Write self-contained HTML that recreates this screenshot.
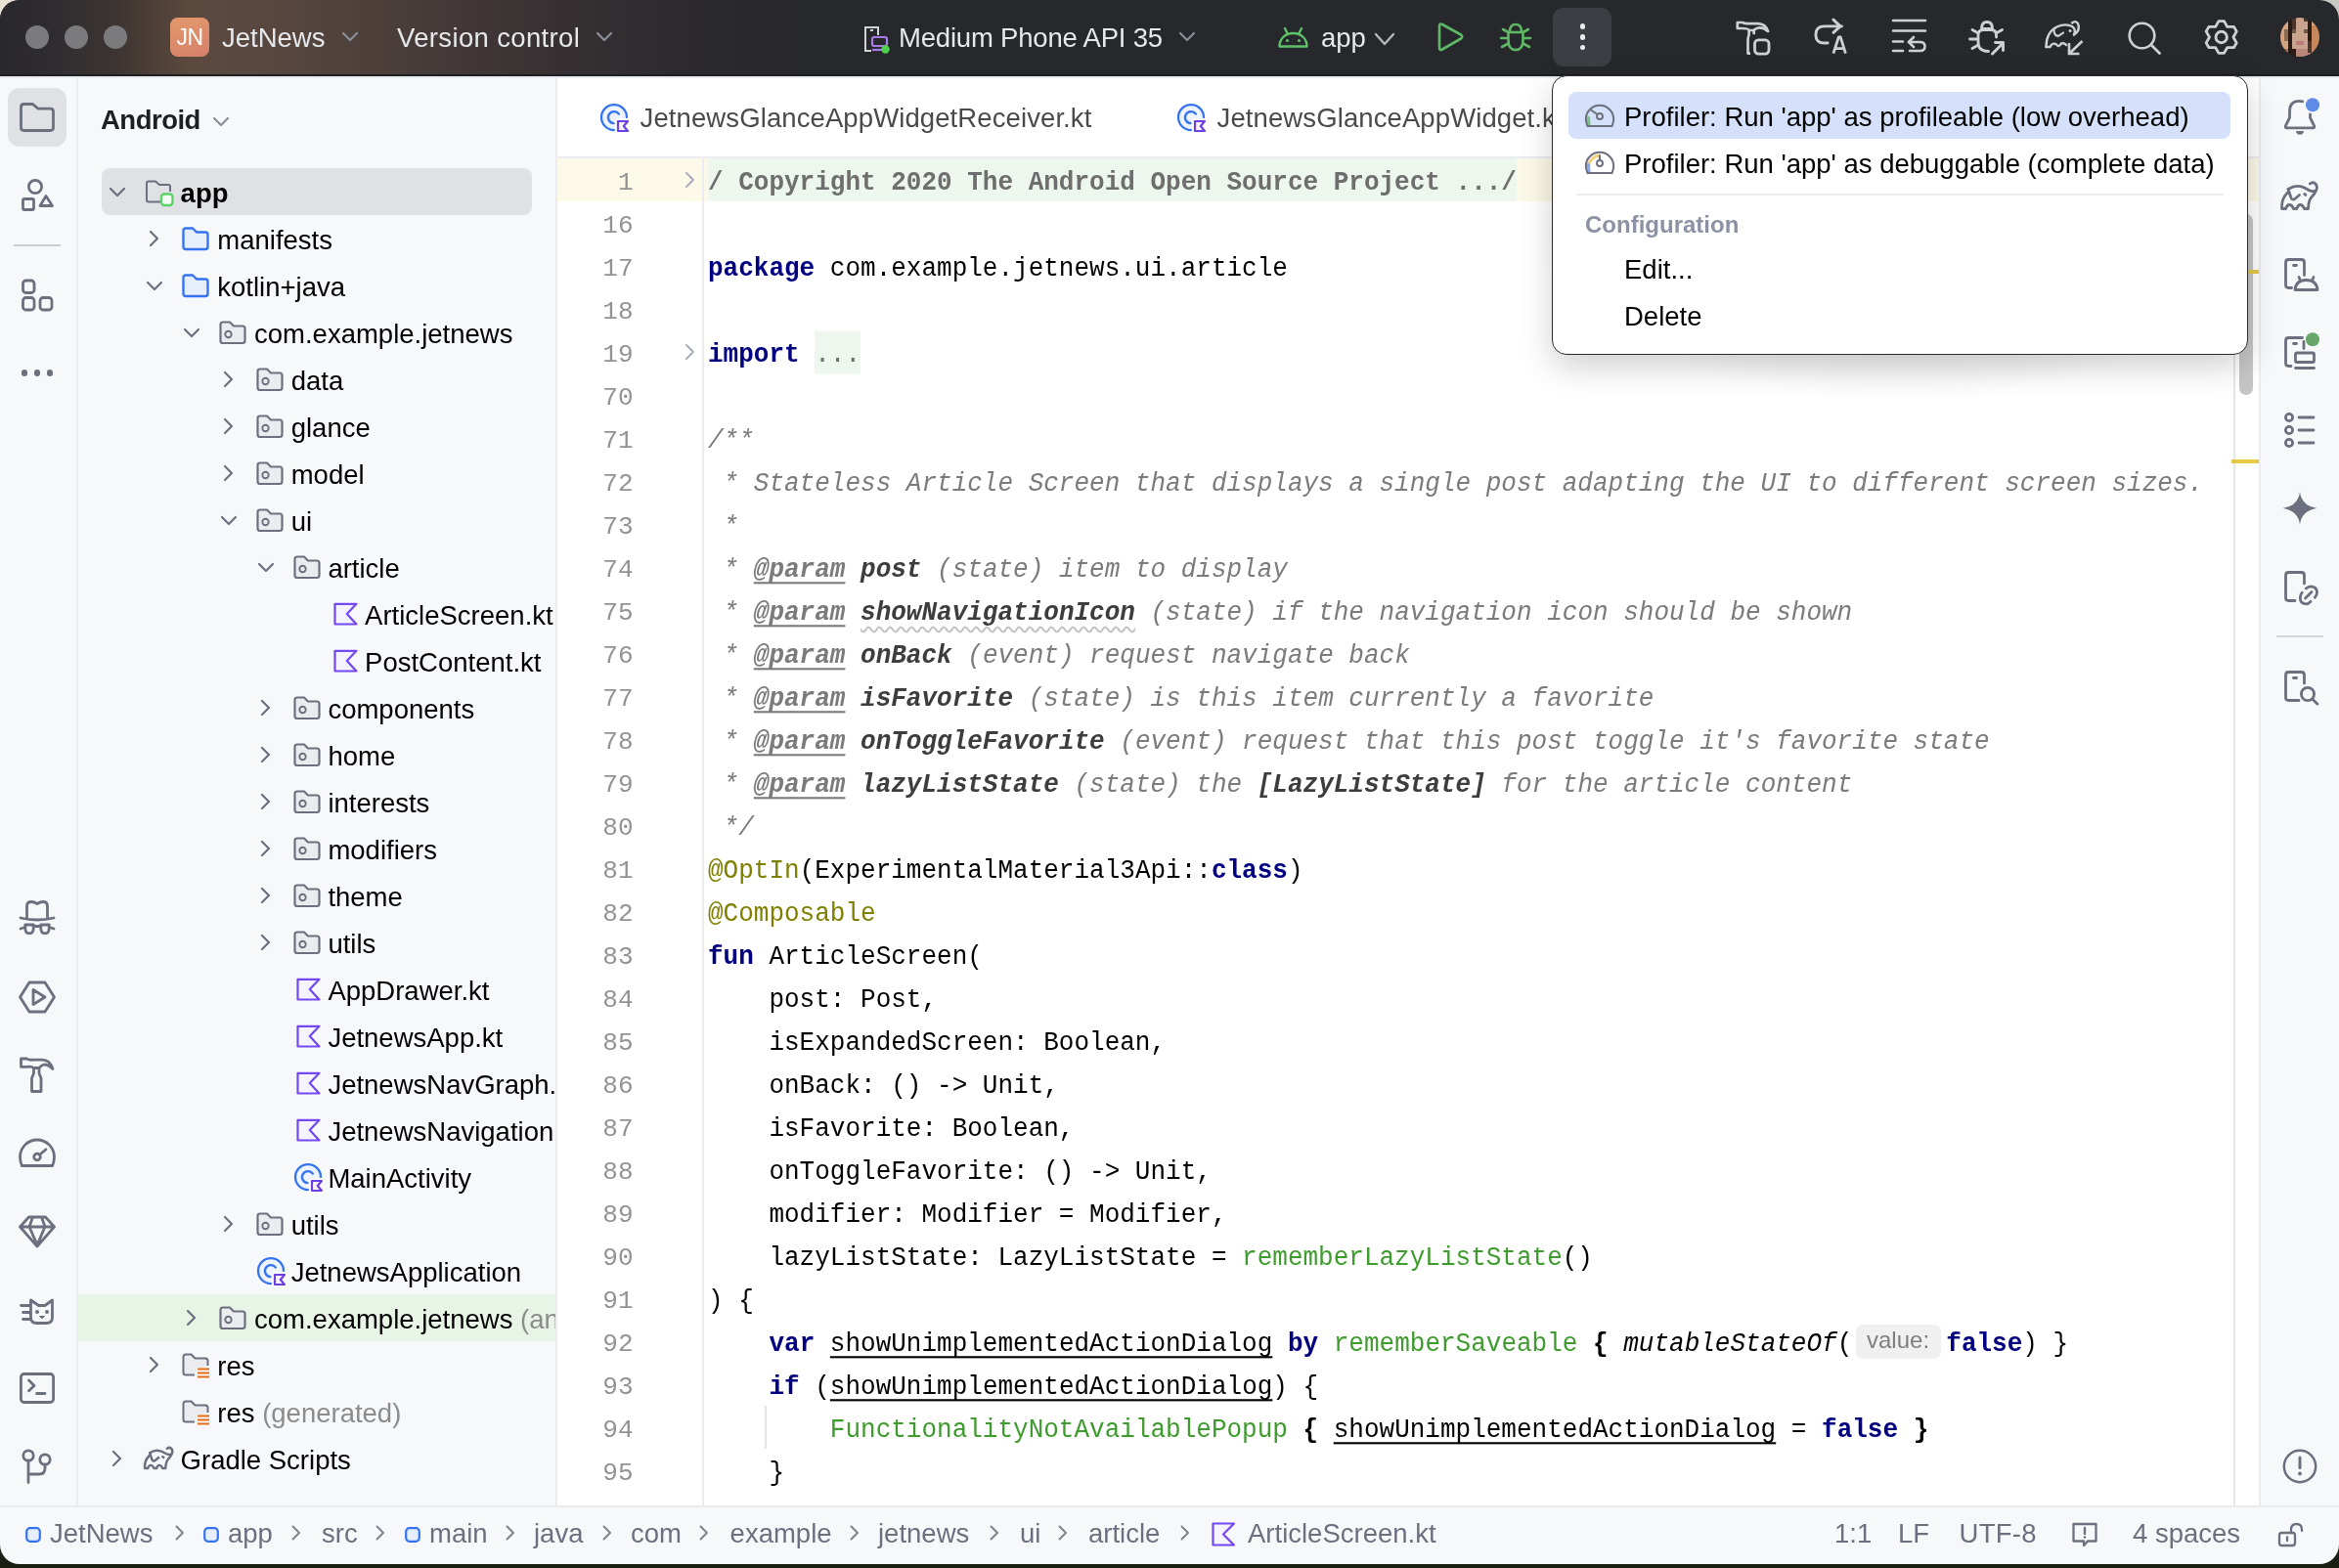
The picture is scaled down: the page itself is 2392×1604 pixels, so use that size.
<!DOCTYPE html>
<html><head><meta charset="utf-8">
<style>
*{margin:0;padding:0;box-sizing:border-box}
html,body{width:2392px;height:1604px;overflow:hidden}
body{position:relative;font-family:"Liberation Sans",sans-serif;background:#1b1e12}
.a{position:absolute}
svg{overflow:visible}
.code{font-family:"Liberation Mono",monospace;font-size:26px;white-space:pre;color:#000;transform:scaleY(1.05);transform-origin:0 29px}
.kw{color:#000080;font-weight:bold}
.an{color:#808000}
.dc{color:#7b7b7b;font-style:italic}
.tag{color:#7b7b7b;font-style:italic;font-weight:bold;text-decoration:underline;text-underline-offset:5px;text-decoration-thickness:2px}
.pn{color:#3d3d3d;font-style:italic;font-weight:bold}
.gr{color:#3e9b2d}
.b{font-weight:bold}
.ul{text-decoration:underline;text-underline-offset:5px;text-decoration-thickness:2px}
.ln{font-family:"Liberation Mono",monospace;font-size:26px;color:#939393;text-align:right;width:80px}
</style></head><body>

<div class="a" style="left:0;top:0;width:60px;height:60px;background:#e8e3d3"></div>
<div class="a" style="left:2332px;top:0;width:60px;height:60px;background:#c9c9c4"></div>
<div class="a" style="left:0;top:1560px;width:2392px;height:44px;background:#1b1e12"></div>
<div class="a" id="win" style="left:0;top:0;width:2392px;height:1600px;border-radius:20px;overflow:hidden;background:#f7f8fa;will-change:transform">
<div class="a" style="left:0;top:0;width:2392px;height:78px;background:#27282c"></div>
<div class="a" style="left:0;top:0;width:900px;height:78px;background:linear-gradient(90deg,#29282d 0px,#302d30 60px,#3d3432 120px,#4f4038 160px,#5c493e 195px,#594840 260px,#51433c 340px,#493d3a 420px,#3f3536 500px,#363032 580px,#2f2c2f 660px,#2a292d 740px,#27282c 840px)"></div>
<div class="a" style="left:0;top:76px;width:2392px;height:2px;background:#1e1f22"></div>
<div class="a" style="left:26px;top:26px;width:24px;height:24px;border-radius:50%;background:#7b7a7c"></div>
<div class="a" style="left:66px;top:26px;width:24px;height:24px;border-radius:50%;background:#7b7a7c"></div>
<div class="a" style="left:106px;top:26px;width:24px;height:24px;border-radius:50%;background:#7b7a7c"></div>
<div class="a" style="left:174px;top:18px;width:40px;height:40px;border-radius:8px;background:linear-gradient(160deg,#e29a6b,#d6806b);color:#fff;font-size:23px;line-height:40px;text-align:center;font-weight:normal;letter-spacing:-0.5px">JN</div>
<div class="a" style="left:227px;top:0px;height:78px;line-height:78px;font-size:27.5px;color:#e6e8ec;font-weight:normal;white-space:nowrap;">JetNews</div>
<svg class="a" style="left:350px;top:33px" width="16" height="9" viewBox="0 0 16 9"><path d="M1 1 L8.0 8 L15 1" fill="none" stroke="#8b8f9a" stroke-width="2.2" stroke-linecap="round" stroke-linejoin="round"/></svg>
<div class="a" style="left:406px;top:0px;height:78px;line-height:78px;font-size:27.5px;color:#e6e8ec;font-weight:normal;white-space:nowrap;letter-spacing:0.35px">Version control</div>
<svg class="a" style="left:610px;top:33px" width="16" height="9" viewBox="0 0 16 9"><path d="M1 1 L8.0 8 L15 1" fill="none" stroke="#8b8f9a" stroke-width="2.2" stroke-linecap="round" stroke-linejoin="round"/></svg>
<svg class="a" style="left:883px;top:26px" width="30" height="30" viewBox="0 0 30 30">
<path d="M8 26 H2 V2 H15 V10" fill="none" stroke="#d0d1d5" stroke-width="2"/>
<path d="M7 5 H10" stroke="#d0d1d5" stroke-width="2"/>
<rect x="9" y="12" width="15" height="9" rx="2" fill="none" stroke="#a77be8" stroke-width="2.2"/>
<path d="M9 25 H19" stroke="#a77be8" stroke-width="2.2"/>
<circle cx="22.5" cy="24.5" r="4.2" fill="#4fd14a"/></svg>
<div class="a" style="left:919px;top:0px;height:78px;line-height:78px;font-size:27.5px;color:#e6e8ec;font-weight:normal;white-space:nowrap;letter-spacing:-0.2px">Medium Phone API 35</div>
<svg class="a" style="left:1206px;top:33px" width="16" height="9" viewBox="0 0 16 9"><path d="M1 1 L8.0 8 L15 1" fill="none" stroke="#8b8f9a" stroke-width="2.2" stroke-linecap="round" stroke-linejoin="round"/></svg>
<svg class="a" style="left:1307px;top:28px" width="31" height="21" viewBox="0 0 31 21">
<path d="M1.5 19.5 C1.5 11.5 7.5 6 15.5 6 C23.5 6 29.5 11.5 29.5 19.5 Z" fill="none" stroke="#5fc26a" stroke-width="2.4" stroke-linejoin="round"/>
<path d="M7 1 L10 7 M24 1 L21 7" stroke="#5fc26a" stroke-width="2.4" stroke-linecap="round"/>
<circle cx="9.5" cy="13.5" r="1.6" fill="#5fc26a"/><circle cx="21.5" cy="13.5" r="1.6" fill="#5fc26a"/></svg>
<div class="a" style="left:1351px;top:0px;height:78px;line-height:78px;font-size:27.5px;color:#e6e8ec;font-weight:normal;white-space:nowrap;">app</div>
<svg class="a" style="left:1406px;top:34px" width="20" height="12" viewBox="0 0 20 12"><path d="M1 1 L10.0 11 L19 1" fill="none" stroke="#b4b6bb" stroke-width="2.4" stroke-linecap="round" stroke-linejoin="round"/></svg>
<svg class="a" style="left:1468px;top:22px" width="30" height="32" viewBox="0 0 30 32"><path d="M4 4.5 Q4 1.5 7 3 L26 13.5 Q28.5 15.5 26 17.5 L7 28.5 Q4 30 4 27 Z" fill="none" stroke="#5fb865" stroke-width="2.6" stroke-linejoin="round"/></svg>
<svg class="a" style="left:1533px;top:22px" width="34" height="32" viewBox="0 0 34 32">
<path d="M11 10 Q11 3 17 3 Q23 3 23 10" fill="none" stroke="#5fb865" stroke-width="2.6"/>
<path d="M9.5 11 H24.5 V19 Q24.5 29 17 29 Q9.5 29 9.5 19 Z" fill="none" stroke="#5fb865" stroke-width="2.6" stroke-linejoin="round"/>
<path d="M2 17 H9 M25 17 H32 M3 26 L9.5 22.5 M31 26 L24.5 22.5 M4 8 L9.5 11 M30 8 L24.5 11" stroke="#5fb865" stroke-width="2.6" stroke-linecap="round"/></svg>
<div class="a" style="left:1588px;top:8px;width:60px;height:60px;border-radius:11px;background:#3d3e43"></div>
<div class="a" style="left:1615.5px;top:24.2px;width:5.6px;height:5.6px;border-radius:50%;background:#eceef2"></div>
<div class="a" style="left:1615.5px;top:35.2px;width:5.6px;height:5.6px;border-radius:50%;background:#eceef2"></div>
<div class="a" style="left:1615.5px;top:45.800000000000004px;width:5.6px;height:5.6px;border-radius:50%;background:#eceef2"></div>
<svg class="a" style="left:1768px;top:14px" width="48" height="48" viewBox="0 0 48 48">
<path d="M8.8 9 H14 Q16 10.2 19 10.2 H30 Q37.5 10.5 40 18 Q35 13.5 30 14.5 Q27 15.5 25.2 17 H21 Q19.5 15 14 15 H8.8 Z" fill="none" stroke="#cfd0d4" stroke-width="2.7" stroke-linejoin="round"/>
<path d="M20.6 16.5 V21.5 Q19.5 24 19.5 28 V40.6 H22" fill="none" stroke="#cfd0d4" stroke-width="2.7" stroke-linejoin="round"/>
<path d="M25.7 17 V21.2" fill="none" stroke="#cfd0d4" stroke-width="2.7"/>
<rect x="26.5" y="26.8" width="14.5" height="14.3" rx="3.8" fill="none" stroke="#cfd0d4" stroke-width="2.8"/></svg>
<svg class="a" style="left:1848px;top:14px" width="48" height="48" viewBox="0 0 48 48">
<path d="M35.5 12.9 H17.8 Q8.9 12.9 8.9 21.4 Q8.9 30 17.8 30 H21.1" fill="none" stroke="#cfd0d4" stroke-width="2.9" stroke-linecap="round"/>
<path d="M26.9 6.1 L34 12.9 L26.9 19.3" fill="none" stroke="#cfd0d4" stroke-width="2.9" stroke-linecap="round" stroke-linejoin="round"/>
<path d="M26.9 40.6 L32.4 23.8 H34.2 L39.4 40.6 M29 35.7 H37.2" fill="none" stroke="#cfd0d4" stroke-width="2.8" stroke-linejoin="round"/></svg>
<svg class="a" style="left:1933px;top:18px" width="40" height="40" viewBox="0 0 40 40">
<path d="M3 3 H36 M3 13.5 H36 M3 24.5 H13 M3 34 H13" stroke="#cfd0d4" stroke-width="2.6" stroke-linecap="round"/>
<path d="M19 25 H30.5 Q35.5 25 35.5 29.5 Q35.5 34 30.5 34 H20" fill="none" stroke="#cfd0d4" stroke-width="2.6" stroke-linecap="round"/>
<path d="M24 20 L19 25 L24 30" fill="none" stroke="#cfd0d4" stroke-width="2.6" stroke-linecap="round" stroke-linejoin="round"/></svg>
<svg class="a" style="left:2008px;top:14px" width="48" height="48" viewBox="0 0 48 48">
<path d="M18.5 15.5 Q18.5 8.5 24 8.5 Q29.5 8.5 29.5 15.5 Z" fill="none" stroke="#cfd0d4" stroke-width="2.8" stroke-linejoin="round"/>
<path d="M25.5 38.5 Q15 38.5 15 29 V22 Q15 16.5 20.5 16.5 H28 Q33.5 16.5 33.5 22 V24" fill="none" stroke="#cfd0d4" stroke-width="2.8" stroke-linecap="round"/>
<path d="M9 16.5 L14.8 19.8 M6.5 26 H14.5 M9 35.5 L14.8 32.2 M39.5 16.5 L33.7 19.8" fill="none" stroke="#cfd0d4" stroke-width="2.8" stroke-linecap="round"/>
<path d="M29.5 41 L40 30.5 M32.5 29.5 H40.5 V37.5" fill="none" stroke="#cfd0d4" stroke-width="2.9" stroke-linecap="round" stroke-linejoin="round"/></svg>
<svg class="a" style="left:2091px;top:19px" width="44" height="40" viewBox="0 0 44 40">
<path d="M1.5 29 Q1.5 14 12.5 8.5 Q21 4.5 28 8 Q32.5 11 30 16.5" fill="none" stroke="#cfd0d4" stroke-width="2.4" stroke-linecap="round"/>
<path d="M30 16.5 Q37 12 34 5 Q31.5 1.5 28 4.5" fill="none" stroke="#cfd0d4" stroke-width="2.4" stroke-linecap="round"/>
<path d="M1.5 29 L5.5 29 Q8 24 12 26.5 Q14 30 17 25.5 Q20 24.5 22 27" fill="none" stroke="#cfd0d4" stroke-width="2.4" stroke-linecap="round"/>
<path d="M9.5 11.5 Q9.5 17 13.5 18 Q16.5 16.5 19 14.5" fill="none" stroke="#cfd0d4" stroke-width="2.2" stroke-linecap="round"/>
<circle cx="26" cy="12.5" r="1.5" fill="#cfd0d4"/>
<path d="M38.5 23 L25.5 35.5 M25 25 V36 H35.5" fill="none" stroke="#cfd0d4" stroke-width="2.6"/></svg>
<svg class="a" style="left:2174px;top:20px" width="38" height="38" viewBox="0 0 38 38">
<circle cx="16.5" cy="16.5" r="12.8" fill="none" stroke="#cfd0d4" stroke-width="2.6"/>
<path d="M26 26 L34.5 34.5" stroke="#cfd0d4" stroke-width="2.8" stroke-linecap="round"/></svg>
<svg class="a" style="left:2250px;top:16px" width="44" height="44" viewBox="0 0 44 44"><path d="M27.80 11.43 L34.54 11.43 L37.27 16.17 L33.90 22.00 L37.27 27.83 L34.54 32.57 L27.80 32.57 L24.43 38.40 L18.97 38.40 L15.60 32.57 L8.86 32.57 L6.13 27.83 L9.50 22.00 L6.13 16.17 L8.86 11.43 L15.60 11.43 L18.97 5.60 L24.43 5.60 Z" fill="none" stroke="#cfd0d4" stroke-width="2.8" stroke-linejoin="round"/><circle cx="21.7" cy="22" r="5.7" fill="none" stroke="#cfd0d4" stroke-width="2.9"/></svg>
<div class="a" style="left:2332px;top:18px;width:40px;height:40px;border-radius:50%;overflow:hidden"><svg width="40" height="40" style="filter:blur(0.6px)"><rect x="0" y="0" width="4.05" height="4.05" fill="#d6a37f"/><rect x="4" y="0" width="4.05" height="4.05" fill="#d6a37f"/><rect x="8" y="0" width="4.05" height="4.05" fill="#2a1c14"/><rect x="12" y="0" width="4.05" height="4.05" fill="#4a362a"/><rect x="16" y="0" width="4.05" height="4.05" fill="#c9a38e"/><rect x="20" y="0" width="4.05" height="4.05" fill="#c9a38e"/><rect x="24" y="0" width="4.05" height="4.05" fill="#4a362a"/><rect x="28" y="0" width="4.05" height="4.05" fill="#2a1c14"/><rect x="32" y="0" width="4.05" height="4.05" fill="#d6a37f"/><rect x="36" y="0" width="4.05" height="4.05" fill="#d6a37f"/><rect x="0" y="4" width="4.05" height="4.05" fill="#d6a37f"/><rect x="4" y="4" width="4.05" height="4.05" fill="#d6a37f"/><rect x="8" y="4" width="4.05" height="4.05" fill="#2a1c14"/><rect x="12" y="4" width="4.05" height="4.05" fill="#4a362a"/><rect x="16" y="4" width="4.05" height="4.05" fill="#c9a38e"/><rect x="20" y="4" width="4.05" height="4.05" fill="#c9a38e"/><rect x="24" y="4" width="4.05" height="4.05" fill="#c9a38e"/><rect x="28" y="4" width="4.05" height="4.05" fill="#2a1c14"/><rect x="32" y="4" width="4.05" height="4.05" fill="#d6a37f"/><rect x="36" y="4" width="4.05" height="4.05" fill="#c7875a"/><rect x="0" y="8" width="4.05" height="4.05" fill="#d6a37f"/><rect x="4" y="8" width="4.05" height="4.05" fill="#d6a37f"/><rect x="8" y="8" width="4.05" height="4.05" fill="#2a1c14"/><rect x="12" y="8" width="4.05" height="4.05" fill="#4a362a"/><rect x="16" y="8" width="4.05" height="4.05" fill="#c9a38e"/><rect x="20" y="8" width="4.05" height="4.05" fill="#c9a38e"/><rect x="24" y="8" width="4.05" height="4.05" fill="#c9a38e"/><rect x="28" y="8" width="4.05" height="4.05" fill="#2a1c14"/><rect x="32" y="8" width="4.05" height="4.05" fill="#c7875a"/><rect x="36" y="8" width="4.05" height="4.05" fill="#c7875a"/><rect x="0" y="12" width="4.05" height="4.05" fill="#d6a37f"/><rect x="4" y="12" width="4.05" height="4.05" fill="#8c6a50"/><rect x="8" y="12" width="4.05" height="4.05" fill="#2a1c14"/><rect x="12" y="12" width="4.05" height="4.05" fill="#6e5a48"/><rect x="16" y="12" width="4.05" height="4.05" fill="#c9a38e"/><rect x="20" y="12" width="4.05" height="4.05" fill="#c9a38e"/><rect x="24" y="12" width="4.05" height="4.05" fill="#6e5a48"/><rect x="28" y="12" width="4.05" height="4.05" fill="#2a1c14"/><rect x="32" y="12" width="4.05" height="4.05" fill="#c7875a"/><rect x="36" y="12" width="4.05" height="4.05" fill="#c7875a"/><rect x="0" y="16" width="4.05" height="4.05" fill="#d6a37f"/><rect x="4" y="16" width="4.05" height="4.05" fill="#8c6a50"/><rect x="8" y="16" width="4.05" height="4.05" fill="#2a1c14"/><rect x="12" y="16" width="4.05" height="4.05" fill="#c9a38e"/><rect x="16" y="16" width="4.05" height="4.05" fill="#c9a38e"/><rect x="20" y="16" width="4.05" height="4.05" fill="#c9a38e"/><rect x="24" y="16" width="4.05" height="4.05" fill="#c9a38e"/><rect x="28" y="16" width="4.05" height="4.05" fill="#2a1c14"/><rect x="32" y="16" width="4.05" height="4.05" fill="#c7875a"/><rect x="36" y="16" width="4.05" height="4.05" fill="#c7875a"/><rect x="0" y="20" width="4.05" height="4.05" fill="#d6a37f"/><rect x="4" y="20" width="4.05" height="4.05" fill="#8c6a50"/><rect x="8" y="20" width="4.05" height="4.05" fill="#2a1c14"/><rect x="12" y="20" width="4.05" height="4.05" fill="#c9a38e"/><rect x="16" y="20" width="4.05" height="4.05" fill="#c9a38e"/><rect x="20" y="20" width="4.05" height="4.05" fill="#c9a38e"/><rect x="24" y="20" width="4.05" height="4.05" fill="#c9a38e"/><rect x="28" y="20" width="4.05" height="4.05" fill="#2a1c14"/><rect x="32" y="20" width="4.05" height="4.05" fill="#c7875a"/><rect x="36" y="20" width="4.05" height="4.05" fill="#c7875a"/><rect x="0" y="24" width="4.05" height="4.05" fill="#d6a37f"/><rect x="4" y="24" width="4.05" height="4.05" fill="#d6a37f"/><rect x="8" y="24" width="4.05" height="4.05" fill="#2a1c14"/><rect x="12" y="24" width="4.05" height="4.05" fill="#c9a38e"/><rect x="16" y="24" width="4.05" height="4.05" fill="#b97a78"/><rect x="20" y="24" width="4.05" height="4.05" fill="#b97a78"/><rect x="24" y="24" width="4.05" height="4.05" fill="#c9a38e"/><rect x="28" y="24" width="4.05" height="4.05" fill="#4a362a"/><rect x="32" y="24" width="4.05" height="4.05" fill="#c7875a"/><rect x="36" y="24" width="4.05" height="4.05" fill="#c7875a"/><rect x="0" y="28" width="4.05" height="4.05" fill="#d6a37f"/><rect x="4" y="28" width="4.05" height="4.05" fill="#d6a37f"/><rect x="8" y="28" width="4.05" height="4.05" fill="#2a1c14"/><rect x="12" y="28" width="4.05" height="4.05" fill="#c9a38e"/><rect x="16" y="28" width="4.05" height="4.05" fill="#c9a38e"/><rect x="20" y="28" width="4.05" height="4.05" fill="#c9a38e"/><rect x="24" y="28" width="4.05" height="4.05" fill="#c9a38e"/><rect x="28" y="28" width="4.05" height="4.05" fill="#4a362a"/><rect x="32" y="28" width="4.05" height="4.05" fill="#c7875a"/><rect x="36" y="28" width="4.05" height="4.05" fill="#c7875a"/><rect x="0" y="32" width="4.05" height="4.05" fill="#d6a37f"/><rect x="4" y="32" width="4.05" height="4.05" fill="#a86a50"/><rect x="8" y="32" width="4.05" height="4.05" fill="#2a1c14"/><rect x="12" y="32" width="4.05" height="4.05" fill="#2a1c14"/><rect x="16" y="32" width="4.05" height="4.05" fill="#b8867a"/><rect x="20" y="32" width="4.05" height="4.05" fill="#b8867a"/><rect x="24" y="32" width="4.05" height="4.05" fill="#b8867a"/><rect x="28" y="32" width="4.05" height="4.05" fill="#4a362a"/><rect x="32" y="32" width="4.05" height="4.05" fill="#c7875a"/><rect x="36" y="32" width="4.05" height="4.05" fill="#a86a50"/><rect x="0" y="36" width="4.05" height="4.05" fill="#a86a50"/><rect x="4" y="36" width="4.05" height="4.05" fill="#a86a50"/><rect x="8" y="36" width="4.05" height="4.05" fill="#2a1c14"/><rect x="12" y="36" width="4.05" height="4.05" fill="#2a1c14"/><rect x="16" y="36" width="4.05" height="4.05" fill="#b8867a"/><rect x="20" y="36" width="4.05" height="4.05" fill="#b8867a"/><rect x="24" y="36" width="4.05" height="4.05" fill="#b8867a"/><rect x="28" y="36" width="4.05" height="4.05" fill="#b8867a"/><rect x="32" y="36" width="4.05" height="4.05" fill="#a86a50"/><rect x="36" y="36" width="4.05" height="4.05" fill="#a86a50"/></svg></div>
<div class="a" style="left:0;top:78px;width:2392px;height:2px;background:#ebecf0"></div>
<div class="a" style="left:78px;top:80px;width:2px;height:1460px;background:#ebecf0"></div>
<div class="a" style="left:568px;top:80px;width:2px;height:1460px;background:#ebecf0"></div>
<div class="a" style="left:570px;top:80px;width:1740px;height:1460px;background:#fff"></div>
<div class="a" style="left:2310px;top:80px;width:2px;height:1460px;background:#ebecf0"></div>
<div class="a" style="left:0;top:1540px;width:2392px;height:2px;background:#ebecf0"></div>
<div class="a" style="left:8px;top:90px;width:60px;height:60px;border-radius:12px;background:#dfe1e5"></div>
<svg class="a" style="left:14px;top:96px" width="48" height="48" viewBox="0 0 48 48"><path d="M7.5 13.5 Q7.5 10.5 10.5 10.5 H19.5 L25 15.2 H37.5 Q40.5 15.2 40.5 18.2 V34.5 Q40.5 37.5 37.5 37.5 H10.5 Q7.5 37.5 7.5 34.5 Z" fill="none" stroke="#6c707e" stroke-width="2.8" stroke-linecap="round" stroke-linejoin="round"/></svg>
<svg class="a" style="left:14px;top:176px" width="48" height="48" viewBox="0 0 48 48"><circle cx="22" cy="15" r="6.6" fill="none" stroke="#6c707e" stroke-width="2.8"/><rect x="9.5" y="27.5" width="11" height="11" rx="1.5" fill="none" stroke="#6c707e" stroke-width="2.8"/><path d="M33 24.5 L39.5 34.5 H27 Z" fill="none" stroke="#6c707e" stroke-width="2.8" stroke-linecap="round" stroke-linejoin="round"/></svg>
<div class="a" style="left:14px;top:250px;width:48px;height:2px;background:#c9ccd6"></div>
<svg class="a" style="left:14px;top:276px" width="48" height="48" viewBox="0 0 48 48"><rect x="9.5" y="11" width="11.5" height="12.5" rx="3" fill="none" stroke="#6c707e" stroke-width="2.8"/><rect x="9.5" y="28.5" width="11.5" height="12.5" rx="3" fill="none" stroke="#6c707e" stroke-width="2.8"/><rect x="27" y="28.5" width="12" height="12.5" rx="3" fill="none" stroke="#6c707e" stroke-width="2.8"/></svg>
<div class="a" style="left:21.8px;top:378.40000000000003px;width:6.4px;height:6.4px;border-radius:50%;background:#6c707e"></div>
<div class="a" style="left:34.8px;top:378.40000000000003px;width:6.4px;height:6.4px;border-radius:50%;background:#6c707e"></div>
<div class="a" style="left:47.8px;top:378.40000000000003px;width:6.4px;height:6.4px;border-radius:50%;background:#6c707e"></div>
<svg class="a" style="left:14px;top:914px" width="48" height="48" viewBox="0 0 48 48"><path d="M13.5 24.5 V13 Q13.5 8.5 18 8.5 Q21 8.5 24 10.5 Q27 8.5 30 8.5 Q34.5 8.5 34.5 13 V24.5" fill="none" stroke="#6c707e" stroke-width="2.8" stroke-linecap="round" stroke-linejoin="round"/><path d="M7 25 Q24 29 41 25" fill="none" stroke="#6c707e" stroke-width="2.8" stroke-linecap="round" stroke-linejoin="round"/><path d="M11.8 32 H20.2 V35.5 Q20.2 40.8 16 40.8 Q11.8 40.8 11.8 35.5 Z M27.8 32 H36.2 V35.5 Q36.2 40.8 32 40.8 Q27.8 40.8 27.8 35.5 Z" fill="none" stroke="#6c707e" stroke-width="2.8" stroke-linecap="round" stroke-linejoin="round"/><path d="M20.2 33.5 H27.8 M7 36 L11.8 34.5 M41 36 L36.2 34.5" fill="none" stroke="#6c707e" stroke-width="2.8" stroke-linecap="round" stroke-linejoin="round"/></svg>
<svg class="a" style="left:14px;top:996px" width="48" height="48" viewBox="0 0 48 48"><path d="M16 9 H32 L41.5 24 L32 39 H16 L6.5 24 Z" fill="none" stroke="#6c707e" stroke-width="2.8" stroke-linecap="round" stroke-linejoin="round"/><path d="M20 16.5 L32 24 L20 31.5 Z" fill="none" stroke="#6c707e" stroke-width="2.8" stroke-linecap="round" stroke-linejoin="round"/></svg>
<svg class="a" style="left:14px;top:1075px" width="48" height="48" viewBox="0 0 48 48"><path d="M7.5 8 H13.5 Q15.5 9.5 19.5 9.2 H29 Q37 9.2 40 18.5 Q35.5 14 31 14 Q28.5 14.5 26 17.5 H20.5 Q18.5 15.5 13.5 16.3 H7.5 Z" fill="none" stroke="#6c707e" stroke-width="2.8" stroke-linecap="round" stroke-linejoin="round"/><path d="M20.5 17.5 V23 L18.5 28 V41.5 H28 V28 L26 23 V17.5" fill="none" stroke="#6c707e" stroke-width="2.8" stroke-linecap="round" stroke-linejoin="round"/></svg>
<svg class="a" style="left:14px;top:1155px" width="48" height="48" viewBox="0 0 48 48"><path d="M8.3 37.5 Q6.5 33 6.5 28.5 A17.5 17.5 0 0 1 41.5 28.5 Q41.5 33 39.7 37.5 Z" fill="none" stroke="#6c707e" stroke-width="2.8" stroke-linecap="round" stroke-linejoin="round"/><circle cx="24" cy="28.5" r="3.3" fill="none" stroke="#6c707e" stroke-width="2.8"/><path d="M26.6 26.2 L33 20.8" fill="none" stroke="#6c707e" stroke-width="2.8" stroke-linecap="round" stroke-linejoin="round"/></svg>
<svg class="a" style="left:14px;top:1235px" width="48" height="48" viewBox="0 0 48 48"><path d="M15.5 10 H32.5 L41.5 20 L24 40 L6.5 20 Z M6.5 20 H41.5 M19.5 10 L16 20 L24 38.5 L32 20 L28.5 10" fill="none" stroke="#6c707e" stroke-width="2.8" stroke-linecap="round" stroke-linejoin="round"/></svg>
<svg class="a" style="left:14px;top:1316px" width="48" height="48" viewBox="0 0 48 48"><path d="M17.5 14 L25.5 19.5 H32 L39.5 14 V31.5 Q39.5 37.5 33.5 37.5 H23.5 Q17.5 37.5 17.5 31.5 Z" fill="none" stroke="#6c707e" stroke-width="2.8" stroke-linecap="round" stroke-linejoin="round"/><path d="M7.5 19.5 H17 M9.5 26.5 H17 M9.5 33.5 H17" fill="none" stroke="#6c707e" stroke-width="2.8" stroke-linecap="round" stroke-linejoin="round"/><circle cx="24" cy="26" r="2" fill="#6c707e"/><circle cx="34" cy="26" r="2" fill="#6c707e"/><path d="M26.5 30.5 H31.5 L29 32.8 Z" fill="#6c707e" stroke="#6c707e" stroke-width="1" stroke-linejoin="round"/></svg>
<svg class="a" style="left:14px;top:1396px" width="48" height="48" viewBox="0 0 48 48"><rect x="7.4" y="9.5" width="33.2" height="29" rx="3.2" fill="none" stroke="#6c707e" stroke-width="2.8"/><path d="M15.5 16 L21 21.5 L15.5 26.8 M23.5 29.5 H32" fill="none" stroke="#6c707e" stroke-width="2.8" stroke-linecap="round" stroke-linejoin="round"/></svg>
<svg class="a" style="left:14px;top:1475px" width="48" height="48" viewBox="0 0 48 48"><circle cx="15" cy="14" r="5.2" fill="none" stroke="#6c707e" stroke-width="2.8"/><circle cx="32" cy="18" r="5.2" fill="none" stroke="#6c707e" stroke-width="2.8"/><path d="M15 19.2 V41.5 M15 33 H26 Q32 33 32 27 V23.2" fill="none" stroke="#6c707e" stroke-width="2.8" stroke-linecap="round" stroke-linejoin="round"/></svg>
<div class="a" style="left:80px;top:80px;width:488px;height:1460px;overflow:hidden">
<div class="a" style="left:23px;top:18px;height:50px;line-height:50px;font-size:27.5px;color:#1e1f22;font-weight:bold;white-space:nowrap;letter-spacing:-0.5px">Android</div>
<svg class="a" style="left:138px;top:40px" width="16" height="9" viewBox="0 0 16 9"><path d="M1 1 L8 8 L15 1" fill="none" stroke="#8a8e9b" stroke-width="2.2" stroke-linecap="round" stroke-linejoin="round"/></svg>
<div class="a" style="left:24px;top:92px;width:440px;height:48px;border-radius:8px;background:#dfe1e5"></div>
<div class="a" style="left:0px;top:1244px;width:488px;height:48px;background:#e8f5e6"></div>
<svg class="a" style="left:31.799999999999997px;top:111.5px" width="16" height="9" viewBox="0 0 16 9"><path d="M1 1 L8 8 L15 1" fill="none" stroke="#6c707e" stroke-width="2.2" stroke-linecap="round" stroke-linejoin="round"/></svg>
<svg class="a" style="left:68.0px;top:104px" width="32" height="30" viewBox="0 0 32 30"><path d="M17 22.5 H4 Q2 22.5 2 20.5 V3.5 Q2 1.5 4 1.5 H11 L15 5 H24 Q26 5 26 7 V12" fill="none" stroke="#6c707e" stroke-width="2" stroke-linejoin="round"/><rect x="17" y="14.5" width="11.5" height="11.5" rx="3" fill="#f2fcf3" stroke="#5fd16a" stroke-width="2.4"/></svg>
<div class="a" style="left:104.6px;top:93.5px;height:48px;line-height:48px;font-size:27.5px;color:#000;font-weight:bold;white-space:nowrap;">app</div>
<svg class="a" style="left:73.30000000000001px;top:156px" width="9" height="16" viewBox="0 0 9 16"><path d="M1 1 L8 8 L1 15" fill="none" stroke="#6c707e" stroke-width="2.2" stroke-linecap="round" stroke-linejoin="round"/></svg>
<svg class="a" style="left:105.9px;top:152px" width="28" height="24" viewBox="0 0 28 24"><path d="M1.5 4 Q1.5 1.5 4 1.5 H11 L15 5.5 H24 Q26.5 5.5 26.5 8 V20.5 Q26.5 23 24 23 H4 Q1.5 23 1.5 20.5 Z" fill="#e7effd" stroke="#3574f0" stroke-width="2.4" stroke-linejoin="round"/></svg>
<div class="a" style="left:142.3px;top:141.5px;height:48px;line-height:48px;font-size:27.5px;color:#000;font-weight:normal;white-space:nowrap;">manifests</div>
<svg class="a" style="left:69.80000000000001px;top:207.5px" width="16" height="9" viewBox="0 0 16 9"><path d="M1 1 L8 8 L15 1" fill="none" stroke="#6c707e" stroke-width="2.2" stroke-linecap="round" stroke-linejoin="round"/></svg>
<svg class="a" style="left:105.9px;top:200px" width="28" height="24" viewBox="0 0 28 24"><path d="M1.5 4 Q1.5 1.5 4 1.5 H11 L15 5.5 H24 Q26.5 5.5 26.5 8 V20.5 Q26.5 23 24 23 H4 Q1.5 23 1.5 20.5 Z" fill="#e7effd" stroke="#3574f0" stroke-width="2.4" stroke-linejoin="round"/></svg>
<div class="a" style="left:142.3px;top:189.5px;height:48px;line-height:48px;font-size:27.5px;color:#000;font-weight:normal;white-space:nowrap;">kotlin+java</div>
<svg class="a" style="left:107.80000000000001px;top:255.5px" width="16" height="9" viewBox="0 0 16 9"><path d="M1 1 L8 8 L15 1" fill="none" stroke="#6c707e" stroke-width="2.2" stroke-linecap="round" stroke-linejoin="round"/></svg>
<svg class="a" style="left:143.8px;top:248px" width="28" height="24" viewBox="0 0 28 24"><path d="M1.5 4 Q1.5 1.5 4 1.5 H11 L15 5.5 H24 Q26.5 5.5 26.5 8 V20.5 Q26.5 23 24 23 H4 Q1.5 23 1.5 20.5 Z" fill="#ebecf0" stroke="#6c707e" stroke-width="2.2" stroke-linejoin="round"/><circle cx="9.5" cy="14" r="3.2" fill="none" stroke="#6c707e" stroke-width="1.9"/></svg>
<div class="a" style="left:180.0px;top:237.5px;height:48px;line-height:48px;font-size:27.5px;color:#000;font-weight:normal;white-space:nowrap;">com.example.jetnews</div>
<svg class="a" style="left:149.3px;top:300px" width="9" height="16" viewBox="0 0 9 16"><path d="M1 1 L8 8 L1 15" fill="none" stroke="#6c707e" stroke-width="2.2" stroke-linecap="round" stroke-linejoin="round"/></svg>
<svg class="a" style="left:181.7px;top:296px" width="28" height="24" viewBox="0 0 28 24"><path d="M1.5 4 Q1.5 1.5 4 1.5 H11 L15 5.5 H24 Q26.5 5.5 26.5 8 V20.5 Q26.5 23 24 23 H4 Q1.5 23 1.5 20.5 Z" fill="#ebecf0" stroke="#6c707e" stroke-width="2.2" stroke-linejoin="round"/><circle cx="9.5" cy="14" r="3.2" fill="none" stroke="#6c707e" stroke-width="1.9"/></svg>
<div class="a" style="left:217.7px;top:285.5px;height:48px;line-height:48px;font-size:27.5px;color:#000;font-weight:normal;white-space:nowrap;">data</div>
<svg class="a" style="left:149.3px;top:348px" width="9" height="16" viewBox="0 0 9 16"><path d="M1 1 L8 8 L1 15" fill="none" stroke="#6c707e" stroke-width="2.2" stroke-linecap="round" stroke-linejoin="round"/></svg>
<svg class="a" style="left:181.7px;top:344px" width="28" height="24" viewBox="0 0 28 24"><path d="M1.5 4 Q1.5 1.5 4 1.5 H11 L15 5.5 H24 Q26.5 5.5 26.5 8 V20.5 Q26.5 23 24 23 H4 Q1.5 23 1.5 20.5 Z" fill="#ebecf0" stroke="#6c707e" stroke-width="2.2" stroke-linejoin="round"/><circle cx="9.5" cy="14" r="3.2" fill="none" stroke="#6c707e" stroke-width="1.9"/></svg>
<div class="a" style="left:217.7px;top:333.5px;height:48px;line-height:48px;font-size:27.5px;color:#000;font-weight:normal;white-space:nowrap;">glance</div>
<svg class="a" style="left:149.3px;top:396px" width="9" height="16" viewBox="0 0 9 16"><path d="M1 1 L8 8 L1 15" fill="none" stroke="#6c707e" stroke-width="2.2" stroke-linecap="round" stroke-linejoin="round"/></svg>
<svg class="a" style="left:181.7px;top:392px" width="28" height="24" viewBox="0 0 28 24"><path d="M1.5 4 Q1.5 1.5 4 1.5 H11 L15 5.5 H24 Q26.5 5.5 26.5 8 V20.5 Q26.5 23 24 23 H4 Q1.5 23 1.5 20.5 Z" fill="#ebecf0" stroke="#6c707e" stroke-width="2.2" stroke-linejoin="round"/><circle cx="9.5" cy="14" r="3.2" fill="none" stroke="#6c707e" stroke-width="1.9"/></svg>
<div class="a" style="left:217.7px;top:381.5px;height:48px;line-height:48px;font-size:27.5px;color:#000;font-weight:normal;white-space:nowrap;">model</div>
<svg class="a" style="left:145.8px;top:447.5px" width="16" height="9" viewBox="0 0 16 9"><path d="M1 1 L8 8 L15 1" fill="none" stroke="#6c707e" stroke-width="2.2" stroke-linecap="round" stroke-linejoin="round"/></svg>
<svg class="a" style="left:181.7px;top:440px" width="28" height="24" viewBox="0 0 28 24"><path d="M1.5 4 Q1.5 1.5 4 1.5 H11 L15 5.5 H24 Q26.5 5.5 26.5 8 V20.5 Q26.5 23 24 23 H4 Q1.5 23 1.5 20.5 Z" fill="#ebecf0" stroke="#6c707e" stroke-width="2.2" stroke-linejoin="round"/><circle cx="9.5" cy="14" r="3.2" fill="none" stroke="#6c707e" stroke-width="1.9"/></svg>
<div class="a" style="left:217.7px;top:429.5px;height:48px;line-height:48px;font-size:27.5px;color:#000;font-weight:normal;white-space:nowrap;">ui</div>
<svg class="a" style="left:183.8px;top:495.5px" width="16" height="9" viewBox="0 0 16 9"><path d="M1 1 L8 8 L15 1" fill="none" stroke="#6c707e" stroke-width="2.2" stroke-linecap="round" stroke-linejoin="round"/></svg>
<svg class="a" style="left:219.60000000000002px;top:488px" width="28" height="24" viewBox="0 0 28 24"><path d="M1.5 4 Q1.5 1.5 4 1.5 H11 L15 5.5 H24 Q26.5 5.5 26.5 8 V20.5 Q26.5 23 24 23 H4 Q1.5 23 1.5 20.5 Z" fill="#ebecf0" stroke="#6c707e" stroke-width="2.2" stroke-linejoin="round"/><circle cx="9.5" cy="14" r="3.2" fill="none" stroke="#6c707e" stroke-width="1.9"/></svg>
<div class="a" style="left:255.39999999999998px;top:477.5px;height:48px;line-height:48px;font-size:27.5px;color:#000;font-weight:normal;white-space:nowrap;">article</div>
<svg class="a" style="left:259.5px;top:536px" width="26" height="24" viewBox="0 0 26 24"><path d="M2.5 1.8 H24.5 L14.8 12 L24.5 22.5 H2.5 Z" fill="#f5f3ff" stroke="#7349ef" stroke-width="2.2" stroke-linejoin="round"/></svg>
<div class="a" style="left:293.1px;top:525.5px;height:48px;line-height:48px;font-size:27.5px;color:#000;font-weight:normal;white-space:nowrap;">ArticleScreen.kt</div>
<svg class="a" style="left:259.5px;top:584px" width="26" height="24" viewBox="0 0 26 24"><path d="M2.5 1.8 H24.5 L14.8 12 L24.5 22.5 H2.5 Z" fill="#f5f3ff" stroke="#7349ef" stroke-width="2.2" stroke-linejoin="round"/></svg>
<div class="a" style="left:293.1px;top:573.5px;height:48px;line-height:48px;font-size:27.5px;color:#000;font-weight:normal;white-space:nowrap;">PostContent.kt</div>
<svg class="a" style="left:187.3px;top:636px" width="9" height="16" viewBox="0 0 9 16"><path d="M1 1 L8 8 L1 15" fill="none" stroke="#6c707e" stroke-width="2.2" stroke-linecap="round" stroke-linejoin="round"/></svg>
<svg class="a" style="left:219.60000000000002px;top:632px" width="28" height="24" viewBox="0 0 28 24"><path d="M1.5 4 Q1.5 1.5 4 1.5 H11 L15 5.5 H24 Q26.5 5.5 26.5 8 V20.5 Q26.5 23 24 23 H4 Q1.5 23 1.5 20.5 Z" fill="#ebecf0" stroke="#6c707e" stroke-width="2.2" stroke-linejoin="round"/><circle cx="9.5" cy="14" r="3.2" fill="none" stroke="#6c707e" stroke-width="1.9"/></svg>
<div class="a" style="left:255.39999999999998px;top:621.5px;height:48px;line-height:48px;font-size:27.5px;color:#000;font-weight:normal;white-space:nowrap;">components</div>
<svg class="a" style="left:187.3px;top:684px" width="9" height="16" viewBox="0 0 9 16"><path d="M1 1 L8 8 L1 15" fill="none" stroke="#6c707e" stroke-width="2.2" stroke-linecap="round" stroke-linejoin="round"/></svg>
<svg class="a" style="left:219.60000000000002px;top:680px" width="28" height="24" viewBox="0 0 28 24"><path d="M1.5 4 Q1.5 1.5 4 1.5 H11 L15 5.5 H24 Q26.5 5.5 26.5 8 V20.5 Q26.5 23 24 23 H4 Q1.5 23 1.5 20.5 Z" fill="#ebecf0" stroke="#6c707e" stroke-width="2.2" stroke-linejoin="round"/><circle cx="9.5" cy="14" r="3.2" fill="none" stroke="#6c707e" stroke-width="1.9"/></svg>
<div class="a" style="left:255.39999999999998px;top:669.5px;height:48px;line-height:48px;font-size:27.5px;color:#000;font-weight:normal;white-space:nowrap;">home</div>
<svg class="a" style="left:187.3px;top:732px" width="9" height="16" viewBox="0 0 9 16"><path d="M1 1 L8 8 L1 15" fill="none" stroke="#6c707e" stroke-width="2.2" stroke-linecap="round" stroke-linejoin="round"/></svg>
<svg class="a" style="left:219.60000000000002px;top:728px" width="28" height="24" viewBox="0 0 28 24"><path d="M1.5 4 Q1.5 1.5 4 1.5 H11 L15 5.5 H24 Q26.5 5.5 26.5 8 V20.5 Q26.5 23 24 23 H4 Q1.5 23 1.5 20.5 Z" fill="#ebecf0" stroke="#6c707e" stroke-width="2.2" stroke-linejoin="round"/><circle cx="9.5" cy="14" r="3.2" fill="none" stroke="#6c707e" stroke-width="1.9"/></svg>
<div class="a" style="left:255.39999999999998px;top:717.5px;height:48px;line-height:48px;font-size:27.5px;color:#000;font-weight:normal;white-space:nowrap;">interests</div>
<svg class="a" style="left:187.3px;top:780px" width="9" height="16" viewBox="0 0 9 16"><path d="M1 1 L8 8 L1 15" fill="none" stroke="#6c707e" stroke-width="2.2" stroke-linecap="round" stroke-linejoin="round"/></svg>
<svg class="a" style="left:219.60000000000002px;top:776px" width="28" height="24" viewBox="0 0 28 24"><path d="M1.5 4 Q1.5 1.5 4 1.5 H11 L15 5.5 H24 Q26.5 5.5 26.5 8 V20.5 Q26.5 23 24 23 H4 Q1.5 23 1.5 20.5 Z" fill="#ebecf0" stroke="#6c707e" stroke-width="2.2" stroke-linejoin="round"/><circle cx="9.5" cy="14" r="3.2" fill="none" stroke="#6c707e" stroke-width="1.9"/></svg>
<div class="a" style="left:255.39999999999998px;top:765.5px;height:48px;line-height:48px;font-size:27.5px;color:#000;font-weight:normal;white-space:nowrap;">modifiers</div>
<svg class="a" style="left:187.3px;top:828px" width="9" height="16" viewBox="0 0 9 16"><path d="M1 1 L8 8 L1 15" fill="none" stroke="#6c707e" stroke-width="2.2" stroke-linecap="round" stroke-linejoin="round"/></svg>
<svg class="a" style="left:219.60000000000002px;top:824px" width="28" height="24" viewBox="0 0 28 24"><path d="M1.5 4 Q1.5 1.5 4 1.5 H11 L15 5.5 H24 Q26.5 5.5 26.5 8 V20.5 Q26.5 23 24 23 H4 Q1.5 23 1.5 20.5 Z" fill="#ebecf0" stroke="#6c707e" stroke-width="2.2" stroke-linejoin="round"/><circle cx="9.5" cy="14" r="3.2" fill="none" stroke="#6c707e" stroke-width="1.9"/></svg>
<div class="a" style="left:255.39999999999998px;top:813.5px;height:48px;line-height:48px;font-size:27.5px;color:#000;font-weight:normal;white-space:nowrap;">theme</div>
<svg class="a" style="left:187.3px;top:876px" width="9" height="16" viewBox="0 0 9 16"><path d="M1 1 L8 8 L1 15" fill="none" stroke="#6c707e" stroke-width="2.2" stroke-linecap="round" stroke-linejoin="round"/></svg>
<svg class="a" style="left:219.60000000000002px;top:872px" width="28" height="24" viewBox="0 0 28 24"><path d="M1.5 4 Q1.5 1.5 4 1.5 H11 L15 5.5 H24 Q26.5 5.5 26.5 8 V20.5 Q26.5 23 24 23 H4 Q1.5 23 1.5 20.5 Z" fill="#ebecf0" stroke="#6c707e" stroke-width="2.2" stroke-linejoin="round"/><circle cx="9.5" cy="14" r="3.2" fill="none" stroke="#6c707e" stroke-width="1.9"/></svg>
<div class="a" style="left:255.39999999999998px;top:861.5px;height:48px;line-height:48px;font-size:27.5px;color:#000;font-weight:normal;white-space:nowrap;">utils</div>
<svg class="a" style="left:221.60000000000002px;top:920px" width="26" height="24" viewBox="0 0 26 24"><path d="M2.5 1.8 H24.5 L14.8 12 L24.5 22.5 H2.5 Z" fill="#f5f3ff" stroke="#7349ef" stroke-width="2.2" stroke-linejoin="round"/></svg>
<div class="a" style="left:255.39999999999998px;top:909.5px;height:48px;line-height:48px;font-size:27.5px;color:#000;font-weight:normal;white-space:nowrap;">AppDrawer.kt</div>
<svg class="a" style="left:221.60000000000002px;top:968px" width="26" height="24" viewBox="0 0 26 24"><path d="M2.5 1.8 H24.5 L14.8 12 L24.5 22.5 H2.5 Z" fill="#f5f3ff" stroke="#7349ef" stroke-width="2.2" stroke-linejoin="round"/></svg>
<div class="a" style="left:255.39999999999998px;top:957.5px;height:48px;line-height:48px;font-size:27.5px;color:#000;font-weight:normal;white-space:nowrap;">JetnewsApp.kt</div>
<svg class="a" style="left:221.60000000000002px;top:1016px" width="26" height="24" viewBox="0 0 26 24"><path d="M2.5 1.8 H24.5 L14.8 12 L24.5 22.5 H2.5 Z" fill="#f5f3ff" stroke="#7349ef" stroke-width="2.2" stroke-linejoin="round"/></svg>
<div class="a" style="left:255.39999999999998px;top:1005.5px;height:48px;line-height:48px;font-size:27.5px;color:#000;font-weight:normal;white-space:nowrap;">JetnewsNavGraph.kt</div>
<svg class="a" style="left:221.60000000000002px;top:1064px" width="26" height="24" viewBox="0 0 26 24"><path d="M2.5 1.8 H24.5 L14.8 12 L24.5 22.5 H2.5 Z" fill="#f5f3ff" stroke="#7349ef" stroke-width="2.2" stroke-linejoin="round"/></svg>
<div class="a" style="left:255.39999999999998px;top:1053.5px;height:48px;line-height:48px;font-size:27.5px;color:#000;font-weight:normal;white-space:nowrap;">JetnewsNavigation.kt</div>
<svg class="a" style="left:214.8px;top:1104px" width="40" height="40" viewBox="0 0 40 40"><circle cx="19.95" cy="20.1" r="12" fill="#eef3fe"/><path d="M33 20.1 A13 13 0 1 0 19.95 33.1" fill="none" stroke="#3574f0" stroke-width="2.3" stroke-linecap="round"/><path d="M24.86 16.66 A6 6 0 1 0 19.43 26.08" fill="none" stroke="#3574f0" stroke-width="2.3" stroke-linecap="round"/><path d="M24 24 H34 L29.8 29 L34 34 H24 Z" fill="#fff" stroke="#fff" stroke-width="5" stroke-linejoin="round"/><path d="M24 24 H34 L29.8 29 L34 34 H24 Z" fill="#f8f5ff" stroke="#6d3fe2" stroke-width="2.2" stroke-linejoin="round"/></svg>
<div class="a" style="left:255.39999999999998px;top:1101.5px;height:48px;line-height:48px;font-size:27.5px;color:#000;font-weight:normal;white-space:nowrap;">MainActivity</div>
<svg class="a" style="left:149.3px;top:1164px" width="9" height="16" viewBox="0 0 9 16"><path d="M1 1 L8 8 L1 15" fill="none" stroke="#6c707e" stroke-width="2.2" stroke-linecap="round" stroke-linejoin="round"/></svg>
<svg class="a" style="left:181.7px;top:1160px" width="28" height="24" viewBox="0 0 28 24"><path d="M1.5 4 Q1.5 1.5 4 1.5 H11 L15 5.5 H24 Q26.5 5.5 26.5 8 V20.5 Q26.5 23 24 23 H4 Q1.5 23 1.5 20.5 Z" fill="#ebecf0" stroke="#6c707e" stroke-width="2.2" stroke-linejoin="round"/><circle cx="9.5" cy="14" r="3.2" fill="none" stroke="#6c707e" stroke-width="1.9"/></svg>
<div class="a" style="left:217.7px;top:1149.5px;height:48px;line-height:48px;font-size:27.5px;color:#000;font-weight:normal;white-space:nowrap;">utils</div>
<svg class="a" style="left:176.89999999999998px;top:1200px" width="40" height="40" viewBox="0 0 40 40"><circle cx="19.95" cy="20.1" r="12" fill="#eef3fe"/><path d="M33 20.1 A13 13 0 1 0 19.95 33.1" fill="none" stroke="#3574f0" stroke-width="2.3" stroke-linecap="round"/><path d="M24.86 16.66 A6 6 0 1 0 19.43 26.08" fill="none" stroke="#3574f0" stroke-width="2.3" stroke-linecap="round"/><path d="M24 24 H34 L29.8 29 L34 34 H24 Z" fill="#fff" stroke="#fff" stroke-width="5" stroke-linejoin="round"/><path d="M24 24 H34 L29.8 29 L34 34 H24 Z" fill="#f8f5ff" stroke="#6d3fe2" stroke-width="2.2" stroke-linejoin="round"/></svg>
<div class="a" style="left:217.7px;top:1197.5px;height:48px;line-height:48px;font-size:27.5px;color:#000;font-weight:normal;white-space:nowrap;">JetnewsApplication</div>
<svg class="a" style="left:111.30000000000001px;top:1260px" width="9" height="16" viewBox="0 0 9 16"><path d="M1 1 L8 8 L1 15" fill="none" stroke="#6c707e" stroke-width="2.2" stroke-linecap="round" stroke-linejoin="round"/></svg>
<svg class="a" style="left:143.8px;top:1256px" width="28" height="24" viewBox="0 0 28 24"><path d="M1.5 4 Q1.5 1.5 4 1.5 H11 L15 5.5 H24 Q26.5 5.5 26.5 8 V20.5 Q26.5 23 24 23 H4 Q1.5 23 1.5 20.5 Z" fill="#ebecf0" stroke="#6c707e" stroke-width="2.2" stroke-linejoin="round"/><circle cx="9.5" cy="14" r="3.2" fill="none" stroke="#6c707e" stroke-width="1.9"/></svg>
<div class="a" style="left:180.0px;top:1245.5px;height:48px;line-height:48px;font-size:27.5px;color:#000;font-weight:normal;white-space:nowrap;">com.example.jetnews<span style="color:#8c8c8c"> (androidTest)</span></div>
<svg class="a" style="left:73.30000000000001px;top:1308px" width="9" height="16" viewBox="0 0 9 16"><path d="M1 1 L8 8 L1 15" fill="none" stroke="#6c707e" stroke-width="2.2" stroke-linecap="round" stroke-linejoin="round"/></svg>
<svg class="a" style="left:105.9px;top:1304px" width="30" height="26" viewBox="0 0 30 26"><path d="M13 22.5 H4 Q1.5 22.5 1.5 20 V4 Q1.5 1.5 4 1.5 H9.5 L13.5 5.5 H24 Q26.5 5.5 26.5 8 V13" fill="#ebecf0" stroke="#6c707e" stroke-width="2" stroke-linejoin="round"/><rect x="15" y="15" width="14" height="11" fill="#f7f8fa"/><path d="M16 16.5 H28 M16 20.5 H28 M16 24.5 H28" stroke="#e66d17" stroke-width="2"/></svg>
<div class="a" style="left:142.3px;top:1293.5px;height:48px;line-height:48px;font-size:27.5px;color:#000;font-weight:normal;white-space:nowrap;">res</div>
<svg class="a" style="left:105.9px;top:1352px" width="30" height="26" viewBox="0 0 30 26"><path d="M13 22.5 H4 Q1.5 22.5 1.5 20 V4 Q1.5 1.5 4 1.5 H9.5 L13.5 5.5 H24 Q26.5 5.5 26.5 8 V13" fill="#ebecf0" stroke="#6c707e" stroke-width="2" stroke-linejoin="round"/><rect x="15" y="15" width="14" height="11" fill="#f7f8fa"/><path d="M16 16.5 H28 M16 20.5 H28 M16 24.5 H28" stroke="#e66d17" stroke-width="2"/></svg>
<div class="a" style="left:142.3px;top:1341.5px;height:48px;line-height:48px;font-size:27.5px;color:#000;font-weight:normal;white-space:nowrap;">res<span style="color:#8c8c8c"> (generated)</span></div>
<svg class="a" style="left:35.3px;top:1404px" width="9" height="16" viewBox="0 0 9 16"><path d="M1 1 L8 8 L1 15" fill="none" stroke="#6c707e" stroke-width="2.2" stroke-linecap="round" stroke-linejoin="round"/></svg>
<svg class="a" style="left:56.0px;top:1388px" width="48" height="48" viewBox="0 0 48 48"><g transform="translate(7.65 4.4) scale(0.79)"><path d="M34.2 12 Q37.5 9.5 40 12 Q42.5 15 40.5 19 Q38.5 23 36 25.5 Q32.8 29 32.5 37.5 H28.5 Q27 33.5 24.5 33.5 Q22 33.5 20.8 37.5 H17.5 Q16 33.5 13.3 33.5 Q10.8 33.5 9.5 37.5 H5.5 Q5 27 11.5 21" fill="none" stroke="#6c707e" stroke-width="3.1" stroke-linecap="round" stroke-linejoin="round"/><path d="M12 17.5 Q17 14.3 21.5 14.3 Q27 14.3 33 18.5 Q36.5 20.3 39.5 19.3" fill="none" stroke="#6c707e" stroke-width="3.1" stroke-linecap="round" stroke-linejoin="round"/><path d="M12 17.5 L15 26.5 Q16 28.8 18.5 27.8 L23.5 23.5" fill="none" stroke="#6c707e" stroke-width="3.1" stroke-linecap="round" stroke-linejoin="round"/><path d="M28.7 22.4 L29.9 23.4" fill="none" stroke="#6c707e" stroke-width="3.1" stroke-linecap="round"/></g></svg>
<div class="a" style="left:104.6px;top:1389.5px;height:48px;line-height:48px;font-size:27.5px;color:#000;font-weight:normal;white-space:nowrap;">Gradle Scripts</div>
</div>
<div class="a" style="left:570px;top:160px;width:1740px;height:2px;background:#ebecf0"></div>
<svg class="a" style="left:608.15px;top:99.69999999999999px" width="40" height="40" viewBox="0 0 40 40"><circle cx="19.95" cy="20.1" r="12" fill="#eef3fe"/><path d="M33 20.1 A13 13 0 1 0 19.95 33.1" fill="none" stroke="#3574f0" stroke-width="2.3" stroke-linecap="round"/><path d="M24.86 16.66 A6 6 0 1 0 19.43 26.08" fill="none" stroke="#3574f0" stroke-width="2.3" stroke-linecap="round"/><path d="M24 24 H34 L29.8 29 L34 34 H24 Z" fill="#fff" stroke="#fff" stroke-width="5" stroke-linejoin="round"/><path d="M24 24 H34 L29.8 29 L34 34 H24 Z" fill="#f8f5ff" stroke="#6d3fe2" stroke-width="2.2" stroke-linejoin="round"/></svg>
<div class="a" style="left:654.6px;top:80.5px;height:80px;line-height:80px;font-size:27.5px;color:#4a4a4c;font-weight:normal;white-space:nowrap;letter-spacing:0.1px">JetnewsGlanceAppWidgetReceiver.kt</div>
<svg class="a" style="left:1198.1499999999999px;top:99.69999999999999px" width="40" height="40" viewBox="0 0 40 40"><circle cx="19.95" cy="20.1" r="12" fill="#eef3fe"/><path d="M33 20.1 A13 13 0 1 0 19.95 33.1" fill="none" stroke="#3574f0" stroke-width="2.3" stroke-linecap="round"/><path d="M24.86 16.66 A6 6 0 1 0 19.43 26.08" fill="none" stroke="#3574f0" stroke-width="2.3" stroke-linecap="round"/><path d="M24 24 H34 L29.8 29 L34 34 H24 Z" fill="#fff" stroke="#fff" stroke-width="5" stroke-linejoin="round"/><path d="M24 24 H34 L29.8 29 L34 34 H24 Z" fill="#f8f5ff" stroke="#6d3fe2" stroke-width="2.2" stroke-linejoin="round"/></svg>
<div class="a" style="left:1244.6px;top:80.5px;height:80px;line-height:80px;font-size:27.5px;color:#4a4a4c;font-weight:normal;white-space:nowrap;letter-spacing:0.1px">JetnewsGlanceAppWidget.kt</div>
<div class="a" style="left:570px;top:162px;width:1740px;height:44px;background:#fdf9e8"></div>
<div class="a" style="left:724px;top:162px;width:827px;height:44px;background:#edf7ed"></div>
<div class="a" style="left:718px;top:162px;width:2px;height:1378px;background:#ebecf0"></div>
<div class="a" style="left:2284px;top:162px;width:2px;height:1378px;background:#e6e6e6"></div>
<div class="a ln" style="left:567.5px;top:165px;height:44px;line-height:44px">1</div>
<div class="a code" style="left:724px;top:165px;height:44px;line-height:44px"><span class="b" style="color:#6e6e6e">/ Copyright 2020 The Android Open Source Project .../</span></div>
<div class="a ln" style="left:567.5px;top:209px;height:44px;line-height:44px">16</div>
<div class="a ln" style="left:567.5px;top:253px;height:44px;line-height:44px">17</div>
<div class="a code" style="left:724px;top:253px;height:44px;line-height:44px"><span class="kw">package</span> com.example.jetnews.ui.article</div>
<div class="a ln" style="left:567.5px;top:297px;height:44px;line-height:44px">18</div>
<div class="a ln" style="left:567.5px;top:341px;height:44px;line-height:44px">19</div>
<div class="a code" style="left:724px;top:341px;height:44px;line-height:44px"><span class="kw">import</span> <span style="color:#6e6e6e;background:#edf7ed;display:inline-block;height:44px;vertical-align:top;line-height:44px;position:relative;top:-1.5px;height:42px;padding-top:1.5px;box-sizing:border-box">...</span></div>
<div class="a ln" style="left:567.5px;top:385px;height:44px;line-height:44px">70</div>
<div class="a ln" style="left:567.5px;top:429px;height:44px;line-height:44px">71</div>
<div class="a code" style="left:724px;top:429px;height:44px;line-height:44px"><span class="dc">/**</span></div>
<div class="a ln" style="left:567.5px;top:473px;height:44px;line-height:44px">72</div>
<div class="a code" style="left:724px;top:473px;height:44px;line-height:44px"><span class="dc"> * Stateless Article Screen that displays a single post adapting the UI to different screen sizes.</span></div>
<div class="a ln" style="left:567.5px;top:517px;height:44px;line-height:44px">73</div>
<div class="a code" style="left:724px;top:517px;height:44px;line-height:44px"><span class="dc"> *</span></div>
<div class="a ln" style="left:567.5px;top:561px;height:44px;line-height:44px">74</div>
<div class="a code" style="left:724px;top:561px;height:44px;line-height:44px"><span class="dc"> * </span><span class="tag">@param</span><span class="dc"> </span><span class="pn">post</span><span class="dc"> (state) item to display</span></div>
<div class="a ln" style="left:567.5px;top:605px;height:44px;line-height:44px">75</div>
<div class="a code" style="left:724px;top:605px;height:44px;line-height:44px"><span class="dc"> * </span><span class="tag">@param</span><span class="dc"> </span><span class="pn" style="text-decoration:underline wavy #c4c4c4;text-decoration-thickness:1.5px;text-underline-offset:6px">showNavigationIcon</span><span class="dc"> (state) if the navigation icon should be shown</span></div>
<div class="a ln" style="left:567.5px;top:649px;height:44px;line-height:44px">76</div>
<div class="a code" style="left:724px;top:649px;height:44px;line-height:44px"><span class="dc"> * </span><span class="tag">@param</span><span class="dc"> </span><span class="pn">onBack</span><span class="dc"> (event) request navigate back</span></div>
<div class="a ln" style="left:567.5px;top:693px;height:44px;line-height:44px">77</div>
<div class="a code" style="left:724px;top:693px;height:44px;line-height:44px"><span class="dc"> * </span><span class="tag">@param</span><span class="dc"> </span><span class="pn">isFavorite</span><span class="dc"> (state) is this item currently a favorite</span></div>
<div class="a ln" style="left:567.5px;top:737px;height:44px;line-height:44px">78</div>
<div class="a code" style="left:724px;top:737px;height:44px;line-height:44px"><span class="dc"> * </span><span class="tag">@param</span><span class="dc"> </span><span class="pn">onToggleFavorite</span><span class="dc"> (event) request that this post toggle it&#x27;s favorite state</span></div>
<div class="a ln" style="left:567.5px;top:781px;height:44px;line-height:44px">79</div>
<div class="a code" style="left:724px;top:781px;height:44px;line-height:44px"><span class="dc"> * </span><span class="tag">@param</span><span class="dc"> </span><span class="pn">lazyListState</span><span class="dc"> (state) the </span><span class="pn">[LazyListState]</span><span class="dc"> for the article content</span></div>
<div class="a ln" style="left:567.5px;top:825px;height:44px;line-height:44px">80</div>
<div class="a code" style="left:724px;top:825px;height:44px;line-height:44px"><span class="dc"> */</span></div>
<div class="a ln" style="left:567.5px;top:869px;height:44px;line-height:44px">81</div>
<div class="a code" style="left:724px;top:869px;height:44px;line-height:44px"><span class="an">@OptIn</span>(ExperimentalMaterial3Api::<span class="kw">class</span>)</div>
<div class="a ln" style="left:567.5px;top:913px;height:44px;line-height:44px">82</div>
<div class="a code" style="left:724px;top:913px;height:44px;line-height:44px"><span class="an">@Composable</span></div>
<div class="a ln" style="left:567.5px;top:957px;height:44px;line-height:44px">83</div>
<div class="a code" style="left:724px;top:957px;height:44px;line-height:44px"><span class="kw">fun</span> ArticleScreen(</div>
<div class="a ln" style="left:567.5px;top:1001px;height:44px;line-height:44px">84</div>
<div class="a code" style="left:724px;top:1001px;height:44px;line-height:44px">    post: Post,</div>
<div class="a ln" style="left:567.5px;top:1045px;height:44px;line-height:44px">85</div>
<div class="a code" style="left:724px;top:1045px;height:44px;line-height:44px">    isExpandedScreen: Boolean,</div>
<div class="a ln" style="left:567.5px;top:1089px;height:44px;line-height:44px">86</div>
<div class="a code" style="left:724px;top:1089px;height:44px;line-height:44px">    onBack: () -&gt; Unit,</div>
<div class="a ln" style="left:567.5px;top:1133px;height:44px;line-height:44px">87</div>
<div class="a code" style="left:724px;top:1133px;height:44px;line-height:44px">    isFavorite: Boolean,</div>
<div class="a ln" style="left:567.5px;top:1177px;height:44px;line-height:44px">88</div>
<div class="a code" style="left:724px;top:1177px;height:44px;line-height:44px">    onToggleFavorite: () -&gt; Unit,</div>
<div class="a ln" style="left:567.5px;top:1221px;height:44px;line-height:44px">89</div>
<div class="a code" style="left:724px;top:1221px;height:44px;line-height:44px">    modifier: Modifier = Modifier,</div>
<div class="a ln" style="left:567.5px;top:1265px;height:44px;line-height:44px">90</div>
<div class="a code" style="left:724px;top:1265px;height:44px;line-height:44px">    lazyListState: LazyListState = <span class="gr">rememberLazyListState</span>()</div>
<div class="a ln" style="left:567.5px;top:1309px;height:44px;line-height:44px">91</div>
<div class="a code" style="left:724px;top:1309px;height:44px;line-height:44px">) {</div>
<div class="a ln" style="left:567.5px;top:1353px;height:44px;line-height:44px">92</div>
<div class="a code" style="left:724px;top:1353px;height:44px;line-height:44px">    <span class="kw">var</span> <span class="ul">showUnimplementedActionDialog</span> <span class="kw">by</span> <span class="gr">rememberSaveable</span> <span class="b">{</span> <i>mutableStateOf</i>(<span style="display:inline-block;width:96px"></span><span class="kw">false</span>) }</div>
<div class="a ln" style="left:567.5px;top:1397px;height:44px;line-height:44px">93</div>
<div class="a code" style="left:724px;top:1397px;height:44px;line-height:44px">    <span class="kw">if</span> (<span class="ul">showUnimplementedActionDialog</span>) {</div>
<div class="a ln" style="left:567.5px;top:1441px;height:44px;line-height:44px">94</div>
<div class="a code" style="left:724px;top:1441px;height:44px;line-height:44px">        <span class="gr">FunctionalityNotAvailablePopup</span> <span class="b">{</span> <span class="ul">showUnimplementedActionDialog</span> = <span class="kw">false</span> <span class="b">}</span></div>
<div class="a ln" style="left:567.5px;top:1485px;height:44px;line-height:44px">95</div>
<div class="a code" style="left:724px;top:1485px;height:44px;line-height:44px">    }</div>
<svg class="a" style="left:701px;top:176px" width="9" height="16" viewBox="0 0 9 16"><path d="M1 1 L8 8 L1 15" fill="none" stroke="#a8adbd" stroke-width="2" stroke-linecap="round" stroke-linejoin="round"/></svg>
<svg class="a" style="left:701px;top:352px" width="9" height="16" viewBox="0 0 9 16"><path d="M1 1 L8 8 L1 15" fill="none" stroke="#a8adbd" stroke-width="2" stroke-linecap="round" stroke-linejoin="round"/></svg>
<div class="a" style="left:1898px;top:1354.5px;width:87px;height:35px;border-radius:7px;background:#f0f0f0"></div>
<div class="a" style="left:1909px;top:1353px;height:35px;line-height:35px;font-size:24px;color:#7f7f7f;font-weight:normal;white-space:nowrap;">value:</div>
<div class="a" style="left:782px;top:1438px;width:2px;height:44px;background:#e4e4e4"></div>
<div class="a" style="left:2290px;top:219px;width:14px;height:185px;border-radius:7px;background:#c6c6c6"></div>
<div class="a" style="left:2282px;top:275.5px;width:28px;height:4px;background:#e5c844"></div>
<div class="a" style="left:2282px;top:470px;width:28px;height:4px;background:#e5c844"></div>
<svg class="a" style="left:2328px;top:94px" width="48" height="48" viewBox="0 0 48 48"><path d="M26.8 9.8 Q25 9.3 23.5 9.3 Q13.5 9.3 13.5 20 V26.5 L9.4 34.6 Q8.6 36.8 10.8 36.8 H37.2 Q39.4 36.8 38.6 34.6 L34.5 26.5 V22.8" fill="none" stroke="#6c707e" stroke-width="2.8" stroke-linecap="round" stroke-linejoin="round"/><path d="M20 40 H28 Q27.5 43.8 24 43.8 Q20.5 43.8 20 40 Z" fill="#6c707e"/><circle cx="37" cy="13.3" r="7" fill="#5e8ae8"/></svg>
<svg class="a" style="left:2328px;top:176px" width="48" height="48" viewBox="0 0 48 48"><path d="M34.2 12 Q37.5 9.5 40 12 Q42.5 15 40.5 19 Q38.5 23 36 25.5 Q32.8 29 32.5 37.5 H28.5 Q27 33.5 24.5 33.5 Q22 33.5 20.8 37.5 H17.5 Q16 33.5 13.3 33.5 Q10.8 33.5 9.5 37.5 H5.5 Q5 27 11.5 21" fill="none" stroke="#6c707e" stroke-width="2.8" stroke-linecap="round" stroke-linejoin="round"/><path d="M12 17.5 Q17 14.3 21.5 14.3 Q27 14.3 33 18.5 Q36.5 20.3 39.5 19.3" fill="none" stroke="#6c707e" stroke-width="2.8" stroke-linecap="round" stroke-linejoin="round"/><path d="M12 17.5 L15 26.5 Q16 28.8 18.5 27.8 L23.5 23.5" fill="none" stroke="#6c707e" stroke-width="2.8" stroke-linecap="round" stroke-linejoin="round"/><path d="M28.7 22.4 L29.9 23.4" fill="none" stroke="#6c707e" stroke-width="2.8" stroke-linecap="round" stroke-linejoin="round"/></svg>
<svg class="a" style="left:2328px;top:256px" width="48" height="48" viewBox="0 0 48 48"><path d="M15.5 38.5 H12.5 Q9.5 38.5 9.5 35.5 V12.5 Q9.5 9.5 12.5 9.5 H25.5 Q28.5 9.5 28.5 12.5 V25.5" fill="none" stroke="#6c707e" stroke-width="2.8" stroke-linecap="round" stroke-linejoin="round"/><path d="M17.5 15.5 H20.5" fill="none" stroke="#6c707e" stroke-width="2.8" stroke-linecap="round" stroke-linejoin="round"/><path d="M19 40.5 Q20 30.5 30.5 30.5 Q41 30.5 42 40.5 Z" fill="none" stroke="#6c707e" stroke-width="2.8" stroke-linecap="round" stroke-linejoin="round"/><path d="M23 27.5 L24.6 31 M38 27.5 L36.4 31" fill="none" stroke="#6c707e" stroke-width="2.8" stroke-linecap="round" stroke-linejoin="round"/></svg>
<svg class="a" style="left:2328px;top:334px" width="48" height="48" viewBox="0 0 48 48"><path d="M15 40.5 H12.5 Q9.5 40.5 9.5 37.5 V14.5 Q9.5 11.5 12.5 11.5 H26.5" fill="none" stroke="#6c707e" stroke-width="2.8" stroke-linecap="round" stroke-linejoin="round"/><path d="M28 15.5 V22.5" fill="none" stroke="#6c707e" stroke-width="2.8" stroke-linecap="round" stroke-linejoin="round"/><path d="M17.5 17.5 H20.5" fill="none" stroke="#6c707e" stroke-width="2.8" stroke-linecap="round" stroke-linejoin="round"/><rect x="19.5" y="27" width="19" height="9.5" rx="1.5" fill="none" stroke="#6c707e" stroke-width="2.8"/><path d="M19.5 42.5 H38.5" fill="none" stroke="#6c707e" stroke-width="2.8" stroke-linecap="round" stroke-linejoin="round"/><circle cx="37" cy="13.3" r="7" fill="#68a66c"/></svg>
<svg class="a" style="left:2328px;top:416px" width="48" height="48" viewBox="0 0 48 48"><circle cx="13" cy="11" r="3.6" fill="none" stroke="#6c707e" stroke-width="2.8"/><circle cx="13" cy="24" r="3.6" fill="none" stroke="#6c707e" stroke-width="2.8"/><circle cx="13" cy="37" r="3.6" fill="none" stroke="#6c707e" stroke-width="2.8"/><path d="M23 11 H38 M23 24 H38 M23 37 H38" fill="none" stroke="#6c707e" stroke-width="2.8" stroke-linecap="round" stroke-linejoin="round"/></svg>
<svg class="a" style="left:2328px;top:496px" width="48" height="48" viewBox="0 0 48 48"><path d="M24 7 Q25.5 21.5 41.5 24 Q25.5 26.5 24 41 Q22.5 26.5 6.5 24 Q22.5 21.5 24 7 Z" fill="#6c707e"/></svg>
<svg class="a" style="left:2328px;top:576px" width="48" height="48" viewBox="0 0 48 48"><path d="M19 38.5 H12.5 Q9.5 38.5 9.5 35.5 V12.5 Q9.5 9.5 12.5 9.5 H25.5 Q28.5 9.5 28.5 12.5 V21" fill="none" stroke="#6c707e" stroke-width="2.8" stroke-linecap="round" stroke-linejoin="round"/><path d="M30.3 26 Q32.5 23.8 35.5 23.8 Q41.5 24.5 41.5 30 Q41.5 33 39.3 35.3 M35 39.3 Q33 41.8 30 41.8 Q24.3 41.5 24.3 35.5 Q24.3 32.5 26.3 30.2 M29.5 36 L36 29.5" fill="none" stroke="#6c707e" stroke-width="2.8" stroke-linecap="round" stroke-linejoin="round"/></svg>
<div class="a" style="left:2328px;top:650px;width:48px;height:2px;background:#d3d5db"></div>
<svg class="a" style="left:2328px;top:678px" width="48" height="48" viewBox="0 0 48 48"><path d="M23 38.5 H12.5 Q9.5 38.5 9.5 35.5 V12.5 Q9.5 9.5 12.5 9.5 H25.5 Q28.5 9.5 28.5 12.5 V21" fill="none" stroke="#6c707e" stroke-width="2.8" stroke-linecap="round" stroke-linejoin="round"/><path d="M17.5 15.5 H20.5" fill="none" stroke="#6c707e" stroke-width="2.8" stroke-linecap="round" stroke-linejoin="round"/><circle cx="32" cy="32" r="6.6" fill="none" stroke="#6c707e" stroke-width="2.8"/><path d="M37 37.3 L42 42.3" fill="none" stroke="#6c707e" stroke-width="2.8" stroke-linecap="round" stroke-linejoin="round"/></svg>
<svg class="a" style="left:2334px;top:1482px" width="36" height="36" viewBox="0 0 36 36"><circle cx="18" cy="18" r="16.2" fill="none" stroke="#6c707e" stroke-width="2.5"/><path d="M18 9 V19.5" stroke="#6c707e" stroke-width="3" stroke-linecap="round"/><circle cx="18" cy="25.5" r="1.9" fill="#6c707e"/></svg>
<svg class="a" style="left:26px;top:1562px" width="16" height="16" viewBox="0 0 16 16"><rect x="1.2" y="1.2" width="13.6" height="13.6" rx="3.5" fill="#e7effd" stroke="#3574f0" stroke-width="2.2"/></svg>
<div class="a" style="left:51px;top:1542px;height:54px;line-height:54px;font-size:27.5px;color:#6c707e;font-weight:normal;white-space:nowrap;">JetNews</div>
<svg class="a" style="left:179px;top:1560.3px" width="10" height="16" viewBox="0 0 10 16"><path d="M1.5 1.5 L8 8 L1.5 14.5" fill="none" stroke="#80848f" stroke-width="2" stroke-linecap="round" stroke-linejoin="round"/></svg>
<svg class="a" style="left:208px;top:1562px" width="16" height="16" viewBox="0 0 16 16"><rect x="1.2" y="1.2" width="13.6" height="13.6" rx="3.5" fill="#e7effd" stroke="#3574f0" stroke-width="2.2"/></svg>
<div class="a" style="left:233px;top:1542px;height:54px;line-height:54px;font-size:27.5px;color:#6c707e;font-weight:normal;white-space:nowrap;">app</div>
<svg class="a" style="left:298px;top:1560.3px" width="10" height="16" viewBox="0 0 10 16"><path d="M1.5 1.5 L8 8 L1.5 14.5" fill="none" stroke="#80848f" stroke-width="2" stroke-linecap="round" stroke-linejoin="round"/></svg>
<div class="a" style="left:329px;top:1542px;height:54px;line-height:54px;font-size:27.5px;color:#6c707e;font-weight:normal;white-space:nowrap;">src</div>
<svg class="a" style="left:384px;top:1560.3px" width="10" height="16" viewBox="0 0 10 16"><path d="M1.5 1.5 L8 8 L1.5 14.5" fill="none" stroke="#80848f" stroke-width="2" stroke-linecap="round" stroke-linejoin="round"/></svg>
<svg class="a" style="left:414px;top:1562px" width="16" height="16" viewBox="0 0 16 16"><rect x="1.2" y="1.2" width="13.6" height="13.6" rx="3.5" fill="#e7effd" stroke="#3574f0" stroke-width="2.2"/></svg>
<div class="a" style="left:439px;top:1542px;height:54px;line-height:54px;font-size:27.5px;color:#6c707e;font-weight:normal;white-space:nowrap;">main</div>
<svg class="a" style="left:516.6px;top:1560.3px" width="10" height="16" viewBox="0 0 10 16"><path d="M1.5 1.5 L8 8 L1.5 14.5" fill="none" stroke="#80848f" stroke-width="2" stroke-linecap="round" stroke-linejoin="round"/></svg>
<div class="a" style="left:546px;top:1542px;height:54px;line-height:54px;font-size:27.5px;color:#6c707e;font-weight:normal;white-space:nowrap;">java</div>
<svg class="a" style="left:615.7px;top:1560.3px" width="10" height="16" viewBox="0 0 10 16"><path d="M1.5 1.5 L8 8 L1.5 14.5" fill="none" stroke="#80848f" stroke-width="2" stroke-linecap="round" stroke-linejoin="round"/></svg>
<div class="a" style="left:645px;top:1542px;height:54px;line-height:54px;font-size:27.5px;color:#6c707e;font-weight:normal;white-space:nowrap;">com</div>
<svg class="a" style="left:714.7px;top:1560.3px" width="10" height="16" viewBox="0 0 10 16"><path d="M1.5 1.5 L8 8 L1.5 14.5" fill="none" stroke="#80848f" stroke-width="2" stroke-linecap="round" stroke-linejoin="round"/></svg>
<div class="a" style="left:746.6px;top:1542px;height:54px;line-height:54px;font-size:27.5px;color:#6c707e;font-weight:normal;white-space:nowrap;">example</div>
<svg class="a" style="left:868.8px;top:1560.3px" width="10" height="16" viewBox="0 0 10 16"><path d="M1.5 1.5 L8 8 L1.5 14.5" fill="none" stroke="#80848f" stroke-width="2" stroke-linecap="round" stroke-linejoin="round"/></svg>
<div class="a" style="left:898px;top:1542px;height:54px;line-height:54px;font-size:27.5px;color:#6c707e;font-weight:normal;white-space:nowrap;">jetnews</div>
<svg class="a" style="left:1012.4px;top:1560.3px" width="10" height="16" viewBox="0 0 10 16"><path d="M1.5 1.5 L8 8 L1.5 14.5" fill="none" stroke="#80848f" stroke-width="2" stroke-linecap="round" stroke-linejoin="round"/></svg>
<div class="a" style="left:1043px;top:1542px;height:54px;line-height:54px;font-size:27.5px;color:#6c707e;font-weight:normal;white-space:nowrap;">ui</div>
<svg class="a" style="left:1082px;top:1560.3px" width="10" height="16" viewBox="0 0 10 16"><path d="M1.5 1.5 L8 8 L1.5 14.5" fill="none" stroke="#80848f" stroke-width="2" stroke-linecap="round" stroke-linejoin="round"/></svg>
<div class="a" style="left:1113px;top:1542px;height:54px;line-height:54px;font-size:27.5px;color:#6c707e;font-weight:normal;white-space:nowrap;">article</div>
<svg class="a" style="left:1206.7px;top:1560.3px" width="10" height="16" viewBox="0 0 10 16"><path d="M1.5 1.5 L8 8 L1.5 14.5" fill="none" stroke="#80848f" stroke-width="2" stroke-linecap="round" stroke-linejoin="round"/></svg>
<svg class="a" style="left:1239px;top:1557px" width="25" height="25" viewBox="0 0 25 25"><path d="M1.5 1.5 H23 L12 12.5 L23 23.5 H1.5 Z" fill="#f5f3ff" stroke="#7349ef" stroke-width="2.2" stroke-linejoin="round"/></svg>
<div class="a" style="left:1276px;top:1542px;height:54px;line-height:54px;font-size:27.5px;color:#6c707e;font-weight:normal;white-space:nowrap;">ArticleScreen.kt</div>
<div class="a" style="left:1876px;top:1542px;height:54px;line-height:54px;font-size:27.5px;color:#6c707e;font-weight:normal;white-space:nowrap;">1:1</div>
<div class="a" style="left:1941px;top:1542px;height:54px;line-height:54px;font-size:27.5px;color:#6c707e;font-weight:normal;white-space:nowrap;">LF</div>
<div class="a" style="left:2003.5px;top:1542px;height:54px;line-height:54px;font-size:27.5px;color:#6c707e;font-weight:normal;white-space:nowrap;letter-spacing:0.3px">UTF-8</div>
<svg class="a" style="left:2118px;top:1557px" width="28" height="26" viewBox="0 0 28 26"><path d="M2.5 2 H25.5 V19.5 H17 L13 24 V19.5 H2.5 Z" fill="none" stroke="#6c707e" stroke-width="2.3" stroke-linejoin="round"/><path d="M14 6 V12" stroke="#6c707e" stroke-width="2.4" stroke-linecap="round"/><circle cx="14" cy="15.5" r="1.3" fill="#6c707e"/></svg>
<div class="a" style="left:2181px;top:1542px;height:54px;line-height:54px;font-size:27.5px;color:#6c707e;font-weight:normal;white-space:nowrap;">4 spaces</div>
<svg class="a" style="left:2329px;top:1557px" width="28" height="26" viewBox="0 0 28 26"><rect x="2" y="11" width="16" height="13" rx="2.5" fill="none" stroke="#6c707e" stroke-width="2.3"/><path d="M14 11 V7.5 Q14 2 19.5 2 Q25 2 25 7.5 V9" fill="none" stroke="#6c707e" stroke-width="2.3" stroke-linecap="round"/><path d="M10 15.5 V19" stroke="#6c707e" stroke-width="2.3" stroke-linecap="round"/></svg>
<div class="a" style="left:1574px;top:78px;width:738px;height:330px;border-radius:18px;background:radial-gradient(closest-side,rgba(0,0,0,.18),rgba(0,0,0,0));filter:blur(0px)"></div>
<div class="a" style="left:1587px;top:77px;width:712px;height:286px;border-radius:15px;background:#fff;border:1.5px solid #2a2a2a;box-shadow:0 12px 34px rgba(0,0,0,.19)"></div>
<div class="a" style="left:1604px;top:94px;width:677px;height:48px;border-radius:8px;background:#d5e1fb"></div>
<svg class="a" style="left:1621px;top:106.5px" width="30" height="24" viewBox="0 0 30 24"><path d="M4.5 21 Q2.5 16.5 4 12" fill="none" stroke="#7fc18a" stroke-width="3"/><path d="M2.5 22 Q0.8 18 0.8 15 A14.2 14.2 0 0 1 29.2 15 Q29.2 18 27.5 22 Z" fill="none" stroke="#6c707e" stroke-width="2" stroke-linejoin="round"/><path d="M6 5.5 L12.5 10" stroke="#6c707e" stroke-width="2"/><circle cx="15" cy="12" r="3" fill="none" stroke="#6c707e" stroke-width="1.9"/></svg>
<div class="a" style="left:1661px;top:95.5px;height:48px;line-height:48px;font-size:27.5px;color:#000;font-weight:normal;white-space:nowrap;">Profiler: Run 'app' as profileable (low overhead)</div>
<svg class="a" style="left:1621px;top:154.5px" width="30" height="24" viewBox="0 0 30 24"><path d="M4.5 21 Q2.5 16.5 4 12" fill="none" stroke="#89a9ec" stroke-width="3"/><path d="M4 12 Q7 5.5 15 3.5" fill="none" stroke="#f2d07a" stroke-width="3"/><path d="M2.5 22 Q0.8 18 0.8 15 A14.2 14.2 0 0 1 29.2 15 Q29.2 18 27.5 22 Z" fill="none" stroke="#6c707e" stroke-width="2" stroke-linejoin="round"/><path d="M15 3.5 V9" stroke="#6c707e" stroke-width="2"/><circle cx="15" cy="12" r="3" fill="none" stroke="#6c707e" stroke-width="1.9"/></svg>
<div class="a" style="left:1661px;top:143.5px;height:48px;line-height:48px;font-size:27.5px;color:#000;font-weight:normal;white-space:nowrap;">Profiler: Run 'app' as debuggable (complete data)</div>
<div class="a" style="left:1612px;top:198px;width:662px;height:2px;background:#ebecf0"></div>
<div class="a" style="left:1621px;top:206px;height:48px;line-height:48px;font-size:24px;color:#8c92a3;font-weight:bold;white-space:nowrap;">Configuration</div>
<div class="a" style="left:1661px;top:251.5px;height:48px;line-height:48px;font-size:27.5px;color:#000;font-weight:normal;white-space:nowrap;">Edit...</div>
<div class="a" style="left:1661px;top:299.5px;height:48px;line-height:48px;font-size:27.5px;color:#000;font-weight:normal;white-space:nowrap;">Delete</div>
</div>
</body></html>
